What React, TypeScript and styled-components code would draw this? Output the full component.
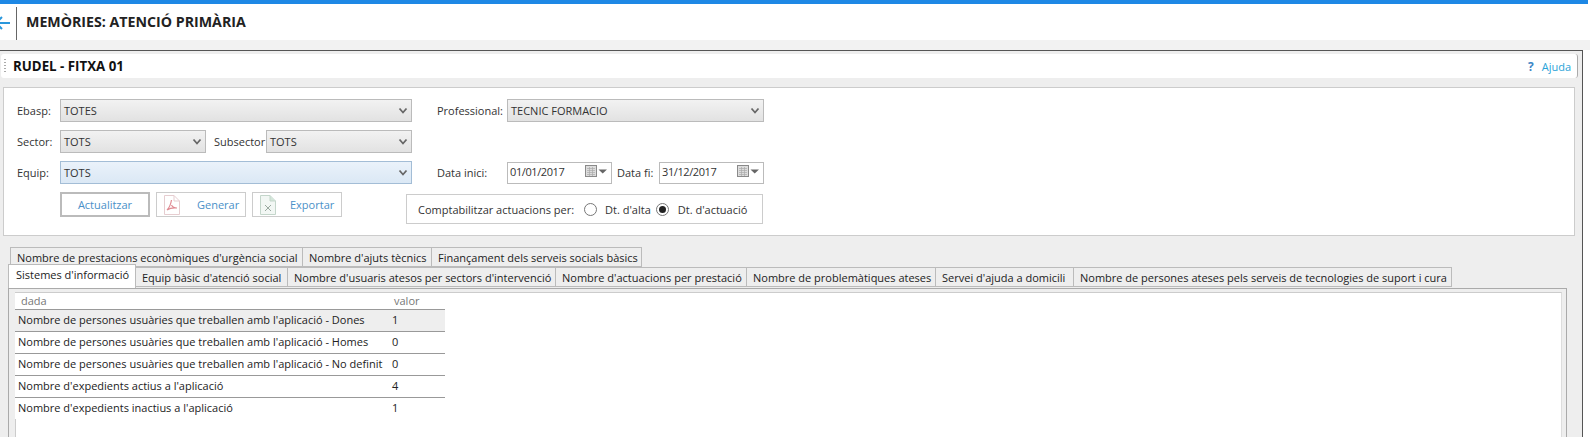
import React from "react";
import styled, { createGlobalStyle } from "styled-components";

const Global = createGlobalStyle`
  html, body { margin: 0; padding: 0; background: #fff; overflow: hidden; }
  body { font-family: "Open Sans", "Liberation Sans", sans-serif; font-size: 11px; color: #222; }
  * { box-sizing: border-box; }
`;

const Page = styled.div`
  width: 1590px;
  height: 437px;
  overflow: hidden;
  background: #fff;
`;
const BlueBar = styled.div`
  height: 4px;
  margin-right: 2px;
  background: #1e88e5;
`;
const AppHeader = styled.header`
  height: 36px;
  display: flex;
  align-items: stretch;
  background: #fff;
`;
const BackSlot = styled.div`
  width: 17px;
  padding: 0 6px 1px 0;
  border-right: 1px solid #666;
  margin-top: 3px;
  overflow: hidden;
  display: flex;
  justify-content: flex-end;
  align-items: center;
`;
const AppTitle = styled.h1`
  margin: 0 0 0 9px;
  font-size: 14.2px;
  line-height: 36px;
  font-weight: 700;
  color: #222;
`;
const Strip = styled.div`
  height: 10px;
  background: #f2f2f2;
`;
const Panel = styled.main`
  width: 1583px;
  height: 387px;
  background: #eee;
  border-top: 1px solid #555;
  border-right: 1px solid #555;
  padding-top: 3px;
`;
const PanelHead = styled.div`
  height: 24px;
  margin: 0 4px 0 1px;
  background: #fff;
  border-radius: 3px;
  display: flex;
  align-items: center;
  padding-right: 6px;
  border-right: 1px solid #aaa;
`;
const Grip = styled.span`
  width: 2px;
  height: 14px;
  margin: 0 7px 0 3px;
  background-image: linear-gradient(#aaa 50%, transparent 50%);
  background-size: 2px 3px;
`;
const PanelTitle = styled.h2`
  margin: 0;
  font-size: 13.3px;
  font-weight: 700;
  color: #111;
  flex: 1;
`;
const Help = styled.a`
  display: flex;
  align-items: center;
  gap: 8px;
  color: #29a3d8;
  font-size: 11px;
`;
const Q = styled.b`
  color: #3c86c6;
  font-size: 12px;
`;
const Filters = styled.section`
  margin: 9px 0 0 3px;
  width: 1572px;
  height: 149px;
  background: #fff;
  border: 1px solid #ccc;
  padding: 11px 0 0 13px;
  display: flex;
`;
const LeftCol = styled.div`
  width: 396px;
  display: flex;
  flex-direction: column;
  gap: 8px;
`;
const RightCol = styled.div`
  margin-left: 24px;
  width: 360px;
  display: flex;
  flex-direction: column;
`;
const Row = styled.div`
  display: flex;
  align-items: center;
  height: 23px;
`;
const DateRow = styled(Row)`
  margin-top: 39px;
`;
const Label = styled.label<{ $w: number; $pad?: number }>`
  width: ${(p) => p.$w}px;
  padding-left: ${(p) => p.$pad ?? 0}px;
  flex: none;
  font-size: 11px;
  color: #333;
`;
const SelectBox = styled.div<{ $w: number; $focus?: boolean }>`
  width: ${(p) => p.$w}px;
  height: 23px;
  flex: none;
  border: 1px solid ${(p) => (p.$focus ? "#a3bdd6" : "#bbb")};
  background: ${(p) =>
    p.$focus
      ? "linear-gradient(#eaf2fa, #dbe8f5)"
      : "linear-gradient(#f2f2f2, #e2e2e2)"};
  display: flex;
  align-items: center;
  justify-content: space-between;
  padding: 0 3px 0 3px;
  font-size: 11px;
  color: #333;
`;
const ButtonRow = styled.div`
  display: flex;
  gap: 6px;
  margin-left: 43px;
`;
const Btn = styled.button<{ $primary?: boolean }>`
  width: 90px;
  height: 25px;
  background: #fff;
  border: ${(p) => (p.$primary ? "2px solid #bbb" : "1px solid #ccc")};
  color: #4a90c8;
  font: 11px "Open Sans", sans-serif;
  display: flex;
  align-items: center;
  justify-content: ${(p) => (p.$primary ? "center" : "flex-start")};
  padding: ${(p) => (p.$primary ? "0" : "0 0 0 7px")};
`;
const BtnText = styled.span<{ $gap: number }>`
  margin-left: ${(p) => p.$gap}px;
`;
const DateBox = styled.div<{ $w: number }>`
  width: ${(p) => p.$w}px;
  height: 22px;
  flex: none;
  border: 1px solid #bbb;
  display: flex;
  align-items: center;
  justify-content: space-between;
  padding: 0 3px 2px 2px;
  font-size: 11px;
  letter-spacing: -0.4px;
  color: #333;
`;
const CountBox = styled.div`
  margin: 10px 0 0 -31px;
  width: 357px;
  height: 30px;
  border: 1px solid #ccc;
  display: flex;
  align-items: center;
  padding-left: 11px;
  font-size: 11px;
  color: #333;
`;
const Radio = styled.span<{ $on?: boolean }>`
  width: 13px;
  height: 13px;
  border-radius: 50%;
  border: 1px solid #777;
  margin: 0 ${(p) => (p.$on ? 9 : 8)}px 0 ${(p) => (p.$on ? 5 : 10)}px;
  display: flex;
  align-items: center;
  justify-content: center;
  &::after {
    content: "";
    width: 7px;
    height: 7px;
    border-radius: 50%;
    background: ${(p) => (p.$on ? "#222" : "transparent")};
  }
`;
const TabRow = styled.div<{ $left: number; $top: number }>`
  display: flex;
  margin: ${(p) => p.$top}px 0 0 ${(p) => p.$left}px;
  position: relative;
`;
const Tab = styled.div<{ $w: number; $active?: boolean }>`
  width: ${(p) => p.$w}px;
  height: ${(p) => (p.$active ? 24 : 20)}px;
  margin-top: ${(p) => (p.$active ? -3 : 0)}px;
  border: 1px solid #bbb;
  border-left-width: ${(p) => (p.$active ? 1 : 0)}px;
  border-bottom: ${(p) => (p.$active ? "none" : "1px solid #bbb")};
  background: ${(p) => (p.$active ? "#fff" : "#eee")};
  white-space: nowrap;
  padding-left: ${(p) => (p.$active ? 7 : 6)}px;
  line-height: 19px;
  font-size: 11px;
  color: #222;
  position: relative;
  z-index: ${(p) => (p.$active ? 2 : 1)};
  &:first-child { border-left-width: 1px; }
`;
const TabBody = styled.div`
  margin: 0 0 0 8px;
  width: 1559px;
  height: 160px;
  border: 1px solid #aaa;
  border-bottom: none;
  padding: 3px 4px 0 6px;
  background: #eee;
`;
const Inner = styled.div`
  height: 160px;
  background: #fff;
  border-top: 1px solid #ccc;
  border-left: 1px solid #ccc;
  border-right: 1px solid #ddd;
`;
const Table = styled.table`
  width: 430px;
  margin-left: -1px;
  border-collapse: collapse;
  table-layout: fixed;
  font-size: 11px;
  background: #fff;
`;
const Th = styled.th<{ $w?: number; $pad: number }>`
  height: 16px;
  width: ${(p) => (p.$w ? `${p.$w}px` : "auto")};
  font-weight: 400;
  text-align: left;
  color: #777;
  padding: 0 0 0 ${(p) => p.$pad}px;
  border-bottom: 1px solid #999;
`;
const Td = styled.td<{ $num?: boolean; $shade?: boolean }>`
  height: 22px;
  padding: 0 0 1px ${(p) => (p.$num ? 7 : 3)}px;
  background: ${(p) => (p.$shade ? "#eee" : "#fff")};
  border-bottom: 1px solid #999;
  color: #222;
  white-space: nowrap;
  overflow: visible;
`;
const LastRow = styled.tr`
  td { border-bottom: none; }
`;

const Chevron = () => (
  <svg width="10" height="8" viewBox="0 0 10 8" fill="none">
    <path d="M1.5 1.5 L5 5.5 L8.5 1.5" stroke="#666" strokeWidth="1.8" />
  </svg>
);
const Select = ({ w, value, focus }: { w: number; value: string; focus?: boolean }) => (
  <SelectBox $w={w} $focus={focus}>
    <span>{value}</span>
    <Chevron />
  </SelectBox>
);
const BackArrow = () => (
  <svg width="16" height="16" viewBox="0 0 16 16" fill="none" style={{ flex: "none" }}>
    <path d="M16 8H2M8 2L2 8L8 14" stroke="#2a97dc" strokeWidth="2" />
  </svg>
);
const PdfIcon = () => (
  <svg width="16" height="20" viewBox="0 0 16 20" fill="none">
    <path d="M.5.5H10L15.5 6V19.5H.5Z" fill="#fff" stroke="#e6cdd0" />
    <path d="M10 .5V6H15.5" stroke="#e6cdd0" />
    <path d="M7.5 5C7 8 6 12 3 15M7.5 10C8.5 12 10 13 13 13M3 15C6 13 9 12.5 13 13" stroke="#e08a92" strokeWidth="1.2" />
  </svg>
);
const XlsIcon = () => (
  <svg width="16" height="20" viewBox="0 0 16 20" fill="none">
    <path d="M.5.5H10L15.5 6V19.5H.5Z" fill="#f2f7f4" stroke="#c4d6cb" />
    <path d="M10 .5V6H15.5" fill="#d4e6da" stroke="#c4d6cb" />
    <path d="M5 10L11 16M11 10L5 16" stroke="#9aa9a0" strokeWidth="1" />
  </svg>
);
const CalIcon = () => (
  <svg width="24" height="13" viewBox="0 0 24 13" fill="none">
    <rect x="1.5" y=".5" width="11" height="11" fill="#ddd" stroke="#8a8a8a" />
    <path d="M3 3.5H11M3 5.5H11M3 7.5H11M3 9.5H11M5.5 2V11M8.5 2V11" stroke="#aaa" strokeWidth=".7" />
    <path d="M14.5 4.5H23L18.7 8.5Z" fill="#666" />
  </svg>
);

const row1 = [
  ["Nombre de prestacions econòmiques d'urgència social", 293],
  ["Nombre d'ajuts tècnics", 129],
  ["Finançament dels serveis socials bàsics", 210],
] as const;
const row2 = [
  ["Sistemes d'informació", 128],
  ["Equip bàsic d'atenció social", 152],
  ["Nombre d'usuaris atesos per sectors d'intervenció", 268],
  ["Nombre d'actuacions per prestació", 191],
  ["Nombre de problemàtiques ateses", 189],
  ["Servei d'ajuda a domicili", 138],
  ["Nombre de persones ateses pels serveis de tecnologies de suport i cura", 378],
] as const;
const rows = [
  ["Nombre de persones usuàries que treballen amb l'aplicació - Dones", "1"],
  ["Nombre de persones usuàries que treballen amb l'aplicació - Homes", "0"],
  ["Nombre de persones usuàries que treballen amb l'aplicació - No definit", "0"],
  ["Nombre d'expedients actius a l'aplicació", "4"],
];

export default function App() {
  return (
    <Page>
      <Global />
      <BlueBar />
      <AppHeader>
        <BackSlot><BackArrow /></BackSlot>
        <AppTitle>MEMÒRIES: ATENCIÓ PRIMÀRIA</AppTitle>
      </AppHeader>
      <Strip />
      <Panel>
        <PanelHead>
          <Grip />
          <PanelTitle>RUDEL - FITXA 01</PanelTitle>
          <Help><Q>?</Q>Ajuda</Help>
        </PanelHead>
        <Filters>
          <LeftCol>
            <Row><Label $w={43}>Ebasp:</Label><Select w={352} value="TOTES" /></Row>
            <Row>
              <Label $w={43}>Sector:</Label>
              <Select w={146} value="TOTS" />
              <Label $w={60} $pad={8}>Subsector</Label>
              <Select w={146} value="TOTS" />
            </Row>
            <Row><Label $w={43}>Equip:</Label><Select w={352} value="TOTS" focus /></Row>
            <ButtonRow>
              <Btn $primary>Actualitzar</Btn>
              <Btn><PdfIcon /><BtnText $gap={17}>Generar</BtnText></Btn>
              <Btn><XlsIcon /><BtnText $gap={14}>Exportar</BtnText></Btn>
            </ButtonRow>
          </LeftCol>
          <RightCol>
            <Row><Label $w={70}>Professional:</Label><Select w={257} value="TECNIC FORMACIO" /></Row>
            <DateRow>
              <Label $w={70}>Data inici:</Label>
              <DateBox $w={105}>01/01/2017<CalIcon /></DateBox>
              <Label $w={47} $pad={5}>Data fi:</Label>
              <DateBox $w={105}>31/12/2017<CalIcon /></DateBox>
            </DateRow>
            <CountBox>
              Comptabilitzar actuacions per:
              <Radio />Dt. d'alta
              <Radio $on />Dt. d'actuació
            </CountBox>
          </RightCol>
        </Filters>
        <TabRow $left={10} $top={11}>
          {row1.map(([t, w]) => <Tab key={t} $w={w}>{t}</Tab>)}
        </TabRow>
        <TabRow $left={8} $top={0}>
          {row2.map(([t, w], i) => <Tab key={t} $w={w} $active={i === 0}>{t}</Tab>)}
        </TabRow>
        <TabBody>
          <Inner>
            <Table>
              <thead><tr><Th $w={370} $pad={6}>dada</Th><Th $pad={9}>valor</Th></tr></thead>
              <tbody>
                {rows.map(([a, b], i) => (
                  <tr key={a}><Td $shade={i === 0}>{a}</Td><Td $num $shade={i === 0}>{b}</Td></tr>
                ))}
                <LastRow><Td>Nombre d'expedients inactius a l'aplicació</Td><Td $num>1</Td></LastRow>
              </tbody>
            </Table>
          </Inner>
        </TabBody>
      </Panel>
    </Page>
  );
}
